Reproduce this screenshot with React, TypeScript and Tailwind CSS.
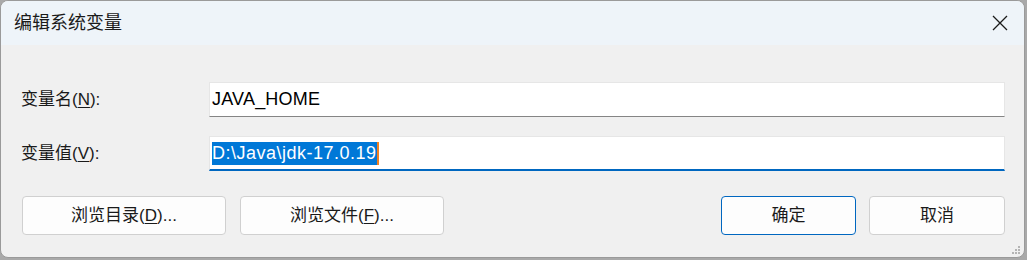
import React from 'react';

const font = { fontFamily: '"Liberation Sans", "Noto Sans CJK SC", sans-serif' };

const Label: React.FC<{ text: string; hot: string }> = ({ text, hot }) => (
    <div className="w-[188px] shrink-0 text-[17px] text-[#1a1a1a]">
        {text}(<span className="underline underline-offset-2">{hot}</span>):
    </div>
);

const Btn: React.FC<{ children: React.ReactNode; w: string; primary?: boolean }> = ({ children, w, primary }) => (
    <button
        className={`${w} h-[39px] rounded-[4px] bg-[#fdfdfd] text-[17px] text-[#1a1a1a] border ${
            primary ? 'border-[#0067c0]' : 'border-[#d0d0d0]'
        }`}
    >
        {children}
    </button>
);

export default function App() {
    return (
        <div className="w-[1027px] h-[260px] bg-[#a9a9a9] overflow-hidden" style={font}>
            <div className="relative w-[1025px] h-[258px] rounded-lg border border-[#9a9a9a] bg-[#f0f0f0] overflow-hidden">
                {/* title bar */}
                <div className="h-[44px] bg-[#eef4f9] flex items-center justify-between pl-[13px] pr-[16px]">
                    <span className="text-[18px] text-[#1a1a1a]">编辑系统变量</span>
                    <svg width="16" height="16" viewBox="0 0 16 16" className="text-[#1a1a1a]">
                        <path d="M1 1 L15 15 M15 1 L1 15" stroke="currentColor" strokeWidth="1.3" fill="none" />
                    </svg>
                </div>

                {/* fields */}
                <div className="pl-[20px] pr-[19px] pt-[37px] flex flex-col gap-[19px]">
                    <div className="flex items-center">
                        <Label text="变量名" hot="N" />
                        <div className="flex-1 h-[35px] bg-white border border-[#e6e6e6] border-b-[#858585] flex items-center pl-[2px]">
                            <span className="text-[18px] tracking-[0.2px] text-black">JAVA_HOME</span>
                        </div>
                    </div>
                    <div className="flex items-center">
                        <Label text="变量值" hot="V" />
                        <div className="flex-1 h-[35px] bg-white border border-[#e6e6e6] border-b-2 border-b-[#0067c0] flex items-center pl-[2px]">
                            <span className="h-[23px] flex items-center bg-[#0078d7] text-[18px] tracking-[0.5px] text-white">
                                D:\Java\jdk-17.0.19
                            </span>
                            <span className="w-[2px] h-[23px] bg-[#f08020]" />
                        </div>
                    </div>
                </div>

                {/* buttons */}
                <div className="mt-[25px] pl-[21px] pr-[19px] flex items-center">
                    <div className="flex gap-[14px]">
                        <Btn w="w-[204px]">
                            浏览目录(<span className="underline underline-offset-2">D</span>)...
                        </Btn>
                        <Btn w="w-[204px]">
                            浏览文件(<span className="underline underline-offset-2">F</span>)...
                        </Btn>
                    </div>
                    <div className="ml-auto flex gap-[13px]">
                        <Btn w="w-[135px]" primary>
                            确定
                        </Btn>
                        <Btn w="w-[136px]">取消</Btn>
                    </div>
                </div>

                {/* size grip */}
                <div className="absolute right-[4px] bottom-[3px] grid grid-cols-3 gap-[1px]">
                    <span className="w-[2px] h-[2px]" />
                    <span className="w-[2px] h-[2px]" />
                    <span className="w-[2px] h-[2px] bg-[#b4b4b4]" />
                    <span className="w-[2px] h-[2px]" />
                    <span className="w-[2px] h-[2px] bg-[#b4b4b4]" />
                    <span className="w-[2px] h-[2px] bg-[#b4b4b4]" />
                    <span className="w-[2px] h-[2px] bg-[#b4b4b4]" />
                    <span className="w-[2px] h-[2px] bg-[#b4b4b4]" />
                    <span className="w-[2px] h-[2px] bg-[#b4b4b4]" />
                </div>
            </div>
        </div>
    );
}
